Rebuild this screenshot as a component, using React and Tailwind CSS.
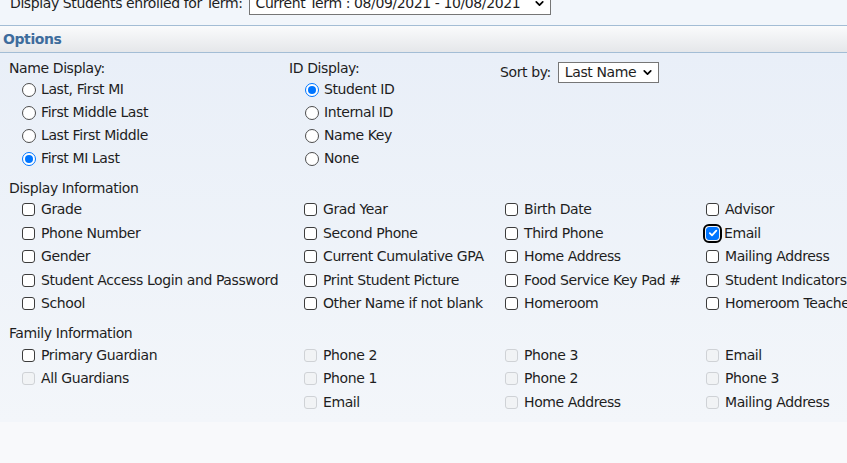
import { ChevronDown } from "lucide-react";

const font = { fontFamily: '"DejaVu Sans", Verdana, sans-serif' };

const Select = ({ value, className }) => (
  <div
    className={`flex items-center justify-between whitespace-nowrap border border-[#767676] bg-white pl-[6px] pr-[4px] ${className}`}
  >
    <span>{value}</span>
    <ChevronDown size={13} strokeWidth={3.2} className="shrink-0 text-black" />
  </div>
);

const Radio = ({ label, checked }) => (
  <label className="flex h-[23px] items-center">
    <span
      className={`ml-[13px] mr-[5px] flex h-[14px] w-[14px] items-center justify-center rounded-full border ${
        checked ? "border-[#0075ff] bg-white" : "border-[#4d4d4d] bg-white"
      }`}
    >
      {checked && <span className="h-[8px] w-[8px] rounded-full bg-[#0075ff]" />}
    </span>
    <span>{label}</span>
  </label>
);

const Check = ({ label, checked, disabled, focused }) => (
  <label className="flex h-[23.5px] items-center whitespace-nowrap">
    <span
      className={`mr-[6px] flex h-[13px] w-[13px] items-center justify-center rounded-[3px] border ${
        checked
          ? "border-[#0075ff] bg-[#0075ff] outline-2 outline-offset-1 outline-black"
          : disabled
          ? "border-[#cfd2d6] bg-[#f1f3f5]"
          : "border-[#3c3c3c] bg-white"
      }`}
    >
      {checked && (
        <svg width="10" height="10" viewBox="0 0 10 10">
          <path
            d="M1.8 5.2 L4 7.3 L8.3 2.6"
            fill="none"
            stroke="white"
            strokeWidth="1.8"
            strokeLinecap="round"
            strokeLinejoin="round"
          />
        </svg>
      )}
    </span>
    <span className={focused ? "-ml-[1px]" : ""}>{label}</span>
  </label>
);

const displayInfo = [
  ["Grade", "Grad Year", "Birth Date", "Advisor"],
  ["Phone Number", "Second Phone", "Third Phone", "Email"],
  ["Gender", "Current Cumulative GPA", "Home Address", "Mailing Address"],
  [
    "Student Access Login and Password",
    "Print Student Picture",
    "Food Service Key Pad #",
    "Student Indicators",
  ],
  ["School", "Other Name if not blank", "Homeroom", "Homeroom Teacher"],
];

const familyCols = [
  [
    { label: "Primary Guardian" },
    { label: "All Guardians", disabled: true },
  ],
  [
    { label: "Phone 2", disabled: true },
    { label: "Phone 1", disabled: true },
    { label: "Email", disabled: true },
  ],
  [
    { label: "Phone 3", disabled: true },
    { label: "Phone 2", disabled: true },
    { label: "Home Address", disabled: true },
  ],
  [
    { label: "Email", disabled: true },
    { label: "Phone 3", disabled: true },
    { label: "Mailing Address", disabled: true },
  ],
];

const App = () => {
  return (
    <div
      className="h-[463px] w-[847px] overflow-hidden bg-[#f8f9fb] text-[14px] tracking-[-0.4px] text-[#1e1e1e]"
      style={font}
    >
      {/* term row */}
      <div className="h-[25px] overflow-hidden bg-[#f2f6fb]">
        <div className="-mt-[8px] flex items-center pl-[10px]">
          <span className="mr-[6px] whitespace-nowrap">
            Display Students enrolled for Term:
          </span>
          <Select
            value="Current Term : 08/09/2021 - 10/08/2021"
            className="h-[23px] w-[302px] shrink-0"
          />
        </div>
      </div>

      {/* options header */}
      <div className="flex h-[28px] items-center border-y border-[#a3bdd5] bg-gradient-to-b from-[#fafbfc] to-[#e5e7ea] pl-[3px] font-bold text-[#3d6c9c]">
        Options
      </div>

      {/* options body */}
      <div className="bg-gradient-to-b from-[#e9eff8] to-[#f3f6fa] pb-[8px] pl-[9px] pt-[5px]">
        <div className="flex">
          <div className="w-[280px]">
            <div className="flex h-[20px] items-center">Name Display:</div>
            <Radio label="Last, First MI" />
            <Radio label="First Middle Last" />
            <Radio label="Last First Middle" />
            <Radio label="First MI Last" checked />
          </div>
          <div className="w-[211px]">
            <div className="flex h-[20px] items-center">ID Display:</div>
            <div className="pl-[3px]">
              <Radio label="Student ID" checked />
              <Radio label="Internal ID" />
              <Radio label="Name Key" />
              <Radio label="None" />
            </div>
          </div>
          <div className="flex h-[26px] items-center pt-[3px]">
            <span className="mr-[7px]">Sort by:</span>
            <Select value="Last Name" className="h-[21px] w-[101px]" />
          </div>
        </div>

        <div className="mt-[8px] flex h-[20px] items-center">
          Display Information
        </div>
        <div className="grid grid-cols-[282px_201px_201px_1fr] pl-[13px]">
          {displayInfo.map((row, r) =>
            row.map((label, c) => (
              <Check
                key={`${r}-${c}`}
                label={label}
                checked={label === "Email"}
                focused={label === "Email"}
              />
            ))
          )}
        </div>

        <div className="mt-[8px] flex h-[20px] items-center">
          Family Information
        </div>
        <div className="grid grid-cols-[282px_201px_201px_1fr] pl-[13px]">
          {familyCols.map((col, c) => (
            <div key={c}>
              {col.map((item, i) => (
                <Check key={i} label={item.label} disabled={item.disabled} />
              ))}
            </div>
          ))}
        </div>
      </div>
    </div>
  );
};

export default App;
